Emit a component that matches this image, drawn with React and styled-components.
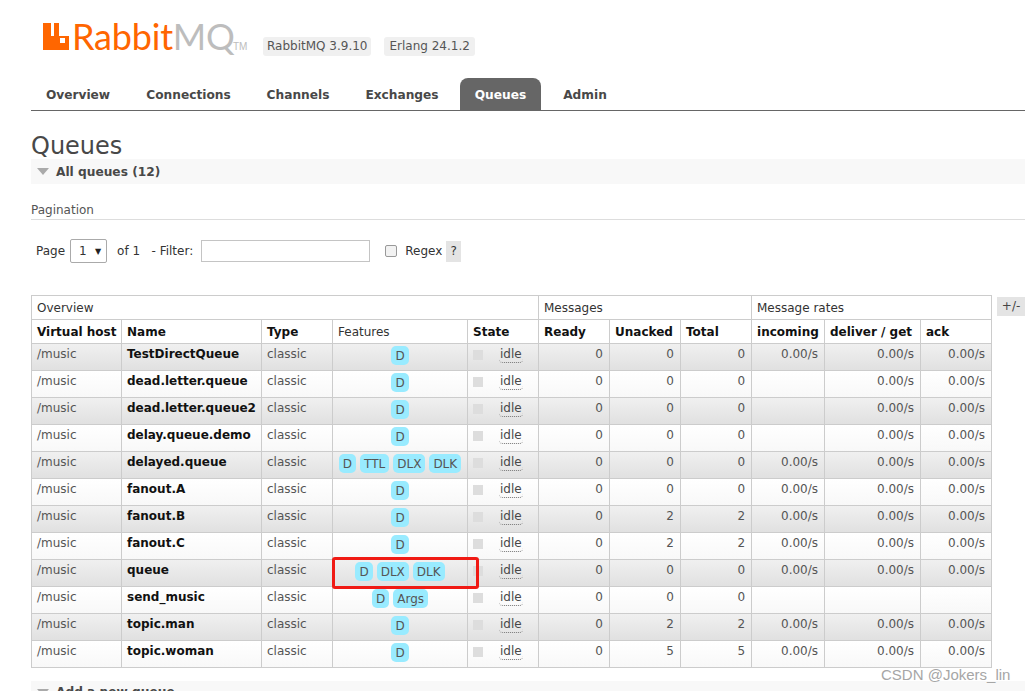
import React from 'react';
import styled, { createGlobalStyle } from 'styled-components';

const GlobalStyle = createGlobalStyle`
  html, body {
    margin: 0;
    padding: 0;
    background: #fff;
    height: 691px;
    overflow: hidden;
  }
  body {
    font-family: "DejaVu Sans", Verdana, sans-serif;
    font-size: 12px;
    color: #484848;
  }
`;

const Page = styled.div`
  position: relative;
  width: 1025px;
  height: 691px;
  overflow: hidden;
`;

const Header = styled.header`
  display: flex;
  align-items: flex-start;
  height: 78px;
  padding-left: 43px;
  box-sizing: border-box;
`;

const LogoMark = styled.svg`
  width: 26px;
  height: 27px;
  margin-top: 23px;
  flex: none;
`;

const LogoText = styled.div`
  font-family: "Lato", sans-serif;
  font-weight: 400;
  font-size: 36px;
  line-height: 40px;
  letter-spacing: -0.2px;
  margin: 16px 0 0 3px;
  color: #ff6600;
  width: 160px;
  flex: none;
  white-space: nowrap;
`;

const LogoGrey = styled.span`
  color: #bdbdbd;
`;

const Tm = styled.span`
  font-family: "Liberation Sans", sans-serif;
  font-size: 10px;
  color: #bdbdbd;
  margin: 41px 0 0 1px;
  width: 30px;
  flex: none;
`;

const Version = styled.span`
  background: #f0f0f0;
  border-radius: 3px;
  padding: 0 ${p => p.$pad}px;
  height: 19px;
  line-height: 19px;
  margin: 37px 13px 0 0;
  font-size: 12px;
  color: #555;
`;

const Nav = styled.nav`
  display: flex;
  height: 32px;
  margin-left: 31px;
  border-bottom: 1px solid #666;
`;

const Tab = styled.a`
  width: ${p => p.$w}px;
  margin-right: 7px;
  box-sizing: border-box;
  text-align: center;
  line-height: 34px;
  font-weight: bold;
  font-size: 12.2px;
  color: ${p => (p.$active ? '#fff' : '#484848')};
  background: ${p => (p.$active ? '#666' : 'transparent')};
  border-radius: 8px 8px 0 0;
`;

const Main = styled.main`
  margin-left: 31px;
`;

const Title = styled.h1`
  margin: 21px 0 0;
  height: 27px;
  font-size: 24px;
  line-height: 28px;
  font-weight: normal;
  color: #484848;
`;

const SectionBar = styled.div`
  display: flex;
  align-items: center;
  height: 25px;
  background: #f8f8f8;
  padding-left: 6px;
  box-sizing: border-box;
  font-weight: bold;
  font-size: 12.2px;
  color: #484848;
`;

const Arrow = styled.span`
  width: 0;
  height: 0;
  border-left: 6px solid transparent;
  border-right: 6px solid transparent;
  border-top: 7px solid #aaa;
  margin-right: 7px;
`;

const SubHead = styled.div`
  margin-top: 18px;
  height: 17px;
  line-height: 16px;
  border-bottom: 1px solid #ddd;
  color: #555;
`;

const Filters = styled.div`
  display: flex;
  align-items: center;
  height: 44px;
  margin-top: 9px;
  padding-left: 5px;
  color: #333;
`;

const PageSelect = styled.div`
  display: flex;
  align-items: center;
  justify-content: space-between;
  box-sizing: border-box;
  width: 37px;
  height: 24px;
  margin: 0 10px 0 5px;
  padding: 0 5px 0 8px;
  border: 1px solid #aaa;
  border-radius: 2px;
  font-size: 12px;
`;

const SelectCaret = styled.span`
  font-size: 8px;
  color: #222;
`;

const FilterInput = styled.div`
  box-sizing: border-box;
  width: 169px;
  height: 22px;
  margin: 0 15px 0 8px;
  border: 1px solid #c4c4c4;
`;

const CheckBox = styled.span`
  box-sizing: border-box;
  width: 12px;
  height: 12px;
  margin: 0 8px 0 0;
  border: 1px solid #999;
  border-radius: 2px;
  background: #f2f2f2;
`;

const Help = styled.span`
  width: 15px;
  height: 21px;
  line-height: 21px;
  margin-left: 4px;
  background: #e4e4e4;
  text-align: center;
`;

const TableRow = styled.div`
  display: flex;
  align-items: flex-start;
  margin-top: 22px;
`;

const Table = styled.table`
  table-layout: fixed;
  width: 960px;
  border-collapse: collapse;
  font-size: 12px;
  flex: none;
`;

const GroupHead = styled.th`
  height: 23px;
  padding: 0 5px;
  border: 1px solid #ccc;
  text-align: left;
  font-weight: normal;
  color: #333;
`;

const ColHead = styled.th`
  height: 23px;
  padding: 0 5px;
  border: 1px solid #ccc;
  text-align: left;
  font-weight: ${p => (p.$plain ? 'normal' : 'bold')};
  color: ${p => (p.$plain ? '#333' : '#111')};
  white-space: nowrap;
  overflow: hidden;
`;

const Row = styled.tr`
  background: ${p =>
    p.$odd
      ? 'linear-gradient(#f0f0f0, #e0e0e0)'
      : 'linear-gradient(#ffffff, #f8f8f8)'};
`;

const Cell = styled.td`
  box-sizing: border-box;
  height: 27px;
  padding: 3px 5px 0;
  border: 1px solid #ccc;
  vertical-align: top;
  line-height: 15px;
  white-space: nowrap;
  color: #555;
`;

const NumCell = styled(Cell)`
  text-align: right;
  padding-right: 6px;
`;

const NameCell = styled(Cell)`
  font-weight: bold;
  color: #111;
`;

const FeatureCell = styled(Cell)`
  position: relative;
  text-align: center;
  padding: 2px 0 0;
`;

const Badges = styled.div`
  display: flex;
  justify-content: center;
  gap: 4px;
`;

const Badge = styled.span`
  height: 19px;
  line-height: 20px;
  padding: 0 4px;
  border-radius: 5px;
  background: #99ebff;
  color: #555;
`;

const Highlight = styled.div`
  position: absolute;
  left: -1px;
  top: -3px;
  width: 147px;
  height: 32px;
  box-sizing: border-box;
  border: 3px solid #f01a14;
  border-radius: 3px;
  z-index: 2;
`;

const StateWrap = styled.div`
  display: flex;
  align-items: flex-start;
`;

const StateDot = styled.span`
  width: 10px;
  height: 10px;
  margin: 3px 16px 0 0;
  background: #ddd;
  flex: none;
`;

const Idle = styled.span`
  color: #484848;
  line-height: 15px;
  border-bottom: 1px dotted #777;
  border-radius: 0 0 4px 4px;
  padding: 0 1px;
`;

const Toggle = styled.span`
  width: 28px;
  height: 19px;
  line-height: 19px;
  margin: 2px 0 0 5px;
  background: #e4e4e4;
  text-align: center;
  color: #444;
  flex: none;
`;

const AddBar = styled(SectionBar)`
  margin-top: 13px;
  padding-bottom: 4px;

  ${Arrow} {
    margin-top: 2px;
  }
`;

const Watermark = styled.div`
  position: absolute;
  left: 881px;
  top: 666px;
  font-family: "Liberation Sans", sans-serif;
  font-size: 15px;
  line-height: 17px;
  color: #a6a6a6;
  z-index: 3;
`;

const tabs = [
  { label: 'Overview', w: 94 },
  { label: 'Connections', w: 113 },
  { label: 'Channels', w: 92 },
  { label: 'Exchanges', w: 102 },
  { label: 'Queues', w: 81, active: true },
  { label: 'Admin', w: 74 },
];

const widths = [90, 140, 71, 135, 71, 71, 71, 71, 73, 96, 71];

const r = '0.00/s';
const queues = [
  { name: 'TestDirectQueue', features: ['D'], ready: 0, unacked: 0, total: 0, incoming: r, deliver: r, ack: r },
  { name: 'dead.letter.queue', features: ['D'], ready: 0, unacked: 0, total: 0, incoming: '', deliver: r, ack: r },
  { name: 'dead.letter.queue2', features: ['D'], ready: 0, unacked: 0, total: 0, incoming: '', deliver: r, ack: r },
  { name: 'delay.queue.demo', features: ['D'], ready: 0, unacked: 0, total: 0, incoming: '', deliver: r, ack: r },
  { name: 'delayed.queue', features: ['D', 'TTL', 'DLX', 'DLK'], ready: 0, unacked: 0, total: 0, incoming: r, deliver: r, ack: r },
  { name: 'fanout.A', features: ['D'], ready: 0, unacked: 0, total: 0, incoming: r, deliver: r, ack: r },
  { name: 'fanout.B', features: ['D'], ready: 0, unacked: 2, total: 2, incoming: r, deliver: r, ack: r },
  { name: 'fanout.C', features: ['D'], ready: 0, unacked: 2, total: 2, incoming: r, deliver: r, ack: r },
  { name: 'queue', features: ['D', 'DLX', 'DLK'], ready: 0, unacked: 0, total: 0, incoming: r, deliver: r, ack: r, marked: true },
  { name: 'send_music', features: ['D', 'Args'], ready: 0, unacked: 0, total: 0, incoming: '', deliver: '', ack: '' },
  { name: 'topic.man', features: ['D'], ready: 0, unacked: 2, total: 2, incoming: r, deliver: r, ack: r },
  { name: 'topic.woman', features: ['D'], ready: 0, unacked: 5, total: 5, incoming: r, deliver: r, ack: r },
];

function App() {
  return (
    <Page>
      <GlobalStyle />
      <Header>
        <LogoMark viewBox="0 0 26 27">
          <path
            fill="#ff6600"
            fillRule="evenodd"
            d="M0 0h8v13h3V0h5v13h10v14H0V0zM17 15v5h5v-5h-5z"
          />
        </LogoMark>
        <LogoText>
          Rabbit<LogoGrey>MQ</LogoGrey>
        </LogoText>
        <Tm>TM</Tm>
        <Version $pad={4}>RabbitMQ 3.9.10</Version>
        <Version $pad={5}>Erlang 24.1.2</Version>
      </Header>

      <Nav>
        {tabs.map(t => (
          <Tab key={t.label} $w={t.w} $active={t.active}>
            {t.label}
          </Tab>
        ))}
      </Nav>

      <Main>
        <Title>Queues</Title>
        <SectionBar>
          <Arrow />
          All queues (12)
        </SectionBar>
        <SubHead>Pagination</SubHead>
        <Filters>
          Page
          <PageSelect>
            1 <SelectCaret>▼</SelectCaret>
          </PageSelect>
          of 1 &nbsp; - Filter:
          <FilterInput />
          <CheckBox />
          Regex
          <Help>?</Help>
        </Filters>

        <TableRow>
          <Table>
            <colgroup>
              {widths.map((w, i) => (
                <col key={i} style={{ width: w }} />
              ))}
            </colgroup>
            <thead>
              <tr>
                <GroupHead colSpan={5}>Overview</GroupHead>
                <GroupHead colSpan={3}>Messages</GroupHead>
                <GroupHead colSpan={3}>Message rates</GroupHead>
              </tr>
              <tr>
                <ColHead>Virtual host</ColHead>
                <ColHead>Name</ColHead>
                <ColHead>Type</ColHead>
                <ColHead $plain>Features</ColHead>
                <ColHead>State</ColHead>
                <ColHead>Ready</ColHead>
                <ColHead>Unacked</ColHead>
                <ColHead>Total</ColHead>
                <ColHead>incoming</ColHead>
                <ColHead>deliver / get</ColHead>
                <ColHead>ack</ColHead>
              </tr>
            </thead>
            <tbody>
              {queues.map((q, i) => (
                <Row key={q.name} $odd={i % 2 === 0}>
                  <Cell>/music</Cell>
                  <NameCell>{q.name}</NameCell>
                  <Cell>classic</Cell>
                  <FeatureCell>
                    <Badges>
                      {q.features.map(f => (
                        <Badge key={f}>{f}</Badge>
                      ))}
                    </Badges>
                    {q.marked && <Highlight />}
                  </FeatureCell>
                  <Cell>
                    <StateWrap>
                      <StateDot />
                      <Idle>idle</Idle>
                    </StateWrap>
                  </Cell>
                  <NumCell>{q.ready}</NumCell>
                  <NumCell>{q.unacked}</NumCell>
                  <NumCell>{q.total}</NumCell>
                  <NumCell>{q.incoming}</NumCell>
                  <NumCell>{q.deliver}</NumCell>
                  <NumCell>{q.ack}</NumCell>
                </Row>
              ))}
            </tbody>
          </Table>
          <Toggle>+/-</Toggle>
        </TableRow>

        <AddBar>
          <Arrow />
          Add a new queue
        </AddBar>
      </Main>

      <Watermark>CSDN @Jokers_lin</Watermark>
    </Page>
  );
}

export default App;
